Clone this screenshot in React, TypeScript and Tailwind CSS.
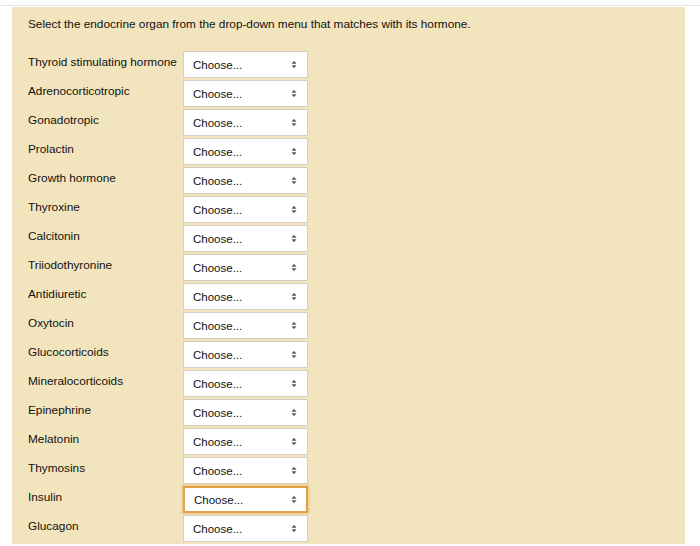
const hormones = [
  "Thyroid stimulating hormone",
  "Adrenocorticotropic",
  "Gonadotropic",
  "Prolactin",
  "Growth hormone",
  "Thyroxine",
  "Calcitonin",
  "Triiodothyronine",
  "Antidiuretic",
  "Oxytocin",
  "Glucocorticoids",
  "Mineralocorticoids",
  "Epinephrine",
  "Melatonin",
  "Thymosins",
  "Insulin",
  "Glucagon",
];

// native select "up/down" caret
function UpDown() {
  return (
    <svg width="6" height="9" viewBox="0 0 6 9" className="text-[#5a5a5a]">
      <path d="M0.5 3.8 L3 0.8 L5.5 3.8 Z" fill="currentColor" />
      <path d="M0.5 5.2 L3 8.2 L5.5 5.2 Z" fill="currentColor" />
    </svg>
  );
}

function Dropdown({ focused }: { focused?: boolean }) {
  return (
    <div
      className={
        focused
          ? "flex h-[27px] w-[125px] items-center justify-between border-2 border-[#e3a24a] bg-white pl-[9px] pr-[9px] shadow-[0_0_2px_1px_rgba(227,162,74,0.5)]"
          : "flex h-[27px] w-[125px] items-center justify-between border border-[#d6cfc2] bg-white pl-[9px] pr-[10px]"
      }
    >
      <span className="pt-[2px] text-[11.5px] text-[#111]">Choose...</span>
      <UpDown />
    </div>
  );
}

export default function App() {
  return (
    <div className="h-[546px] w-[700px] bg-white font-['Liberation_Sans',Arial,sans-serif]">
      <div className="h-[5px]" />
      <div className="border-t border-[#e6e6e6] pt-[1px]">
        <div className="ml-[12px] h-[537px] w-[673px] bg-[#f2e5bd] pl-[16px] pt-[10px]">
          <p className="text-[11.8px] leading-[14px] text-[#111]">
            Select the endocrine organ from the drop-down menu that matches with its hormone.
          </p>

          <div className="mt-[20px] grid grid-cols-[155px_125px] gap-y-[2px]">
            {hormones.map((h) => (
              <div key={h} className="contents">
                <div className="pt-[4px] text-[11.8px] leading-[14px] text-[#111]">{h}</div>
                <Dropdown focused={h === "Insulin"} />
              </div>
            ))}
          </div>
        </div>
      </div>
    </div>
  );
}
